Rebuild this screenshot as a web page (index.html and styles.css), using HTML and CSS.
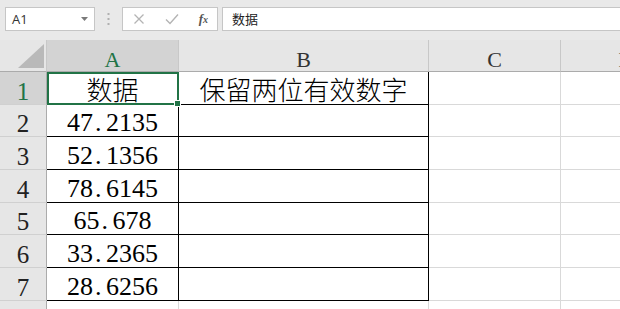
FILE: index.html
```html
<!DOCTYPE html>
<html lang="zh-CN">
<head>
<meta charset="utf-8">
<title>Sheet</title>
<link rel="stylesheet" href="styles.css">
</head>
<body>
<div class="app">
  <div class="fbar">
    <div class="namebox">
      <span class="nb-text">A1</span>
      <svg class="nb-arrow" width="7" height="4" viewBox="0 0 7 4"><path d="M0 0H7L3.5 4Z" fill="#7a7a7a"/></svg>
    </div>
    <div class="grip">
      <svg width="3" height="12" viewBox="0 0 3 12"><rect x="0.5" y="0" width="2" height="2" fill="#b0b0b0"/><rect x="0.5" y="5" width="2" height="2" fill="#b0b0b0"/><rect x="0.5" y="10" width="2" height="2" fill="#b0b0b0"/></svg>
    </div>
    <div class="btns">
      <svg class="ic" width="12" height="12" viewBox="0 0 12 12"><path d="M1.5 1.5L10.5 10.5M10.5 1.5L1.5 10.5" stroke="#b4b4b4" stroke-width="1.3" fill="none"/></svg>
      <svg class="ic" width="14" height="12" viewBox="0 0 14 12"><path d="M1 6.5L5 10.5L13 1.5" stroke="#b4b4b4" stroke-width="1.4" fill="none"/></svg>
      <span class="fx">f<span class="fx-sub">x</span></span>
    </div>
    <div class="finput">数据</div>
  </div>
  <div class="sheet">
    <div class="corner"><svg width="26" height="24" viewBox="0 0 26 24"><path d="M26 0V24H0Z" fill="#b9b9b9"/></svg></div>
    <div class="ch ch-sel">A</div>
    <div class="ch">B</div>
    <div class="ch">C</div>
    <div class="ch">D</div>

    <div class="rh rh-sel">1</div>
    <div class="cell bd sel"><span class="zh">数据</span></div>
    <div class="cell bd"><span class="zh">保留两位有效数字</span></div>
    <div class="cell"></div>
    <div class="cell"></div>

    <div class="rh">2</div>
    <div class="cell bd">47<span class="dot">.</span>2135</div>
    <div class="cell bd"></div>
    <div class="cell"></div>
    <div class="cell"></div>

    <div class="rh">3</div>
    <div class="cell bd">52<span class="dot">.</span>1356</div>
    <div class="cell bd"></div>
    <div class="cell"></div>
    <div class="cell"></div>

    <div class="rh">4</div>
    <div class="cell bd">78<span class="dot">.</span>6145</div>
    <div class="cell bd"></div>
    <div class="cell"></div>
    <div class="cell"></div>

    <div class="rh">5</div>
    <div class="cell bd">65<span class="dot">.</span>678</div>
    <div class="cell bd"></div>
    <div class="cell"></div>
    <div class="cell"></div>

    <div class="rh">6</div>
    <div class="cell bd">33<span class="dot">.</span>2365</div>
    <div class="cell bd"></div>
    <div class="cell"></div>
    <div class="cell"></div>

    <div class="rh">7</div>
    <div class="cell bd">28<span class="dot">.</span>6256</div>
    <div class="cell bd"></div>
    <div class="cell"></div>
    <div class="cell"></div>

    <div class="rh">8</div>
    <div class="cell"></div>
    <div class="cell"></div>
    <div class="cell"></div>
    <div class="cell"></div>
  </div>
</div>
</body>
</html>
```
FILE: styles.css
```css
html, body {
  margin: 0;
  padding: 0;
  background: #e9e9e9;
}
.app {
  width: 620px;
  height: 309px;
  overflow: hidden;
  background: #e9e9e9;
}
.fbar {
  height: 40px;
  box-sizing: border-box;
  padding: 7px 0 0 5px;
  display: flex;
  align-items: flex-start;
}
.namebox {
  width: 90px;
  height: 24px;
  box-sizing: border-box;
  background: #fff;
  border: 1px solid #c6c6c6;
  display: flex;
  align-items: center;
  padding: 0 6px 0 6px;
}
.nb-text {
  flex: 1;
  font-family: "Open Sans", "Liberation Sans", sans-serif;
  font-size: 13px;
  color: #333;
}
.grip {
  width: 27px;
  height: 24px;
  display: flex;
  align-items: center;
  justify-content: center;
}
.btns {
  width: 96px;
  height: 24px;
  box-sizing: border-box;
  background: #fff;
  border: 1px solid #c6c6c6;
  display: flex;
  align-items: center;
  justify-content: space-between;
  padding: 0 9px 0 10px;
}
.fx {
  font-family: "Liberation Serif", serif;
  font-style: italic;
  font-weight: bold;
  font-size: 13px;
  color: #555;
}
.fx-sub {
  font-size: 10px;
}
.finput {
  flex: 1;
  margin-left: 4px;
  margin-right: -2px;
  height: 24px;
  box-sizing: border-box;
  background: #fff;
  border: 1px solid #c6c6c6;
  padding: 0 9px;
  font-family: "Noto Sans CJK SC", sans-serif;
  font-size: 13px;
  line-height: 22px;
  color: #222;
}
.sheet {
  display: grid;
  grid-template-columns: 47px 132px 250px 132px 132px;
  grid-template-rows: 32px repeat(8, 32.7px);
  background: #fff;
  width: 693px;
}
.sheet > div {
  box-sizing: border-box;
}
.corner {
  background: #e6e6e6;
  border-right: 1px solid #c8c8c8;
  border-bottom: 1px solid #ababab;
  display: flex;
  align-items: flex-end;
  justify-content: flex-end;
  padding: 0 2px 3px 0;
}
.ch {
  background: #e6e6e6;
  border-right: 1px solid #c8c8c8;
  border-bottom: 1px solid #ababab;
  display: flex;
  align-items: flex-end;
  justify-content: center;
  font-family: "Liberation Serif", serif;
  font-size: 22px;
  line-height: 1;
  padding-bottom: 0;
  color: #333;
}
.ch-sel {
  background: #d3d3d3;
  color: #217346;
}
.rh {
  background: #e6e6e6;
  border-right: 1px solid #ababab;
  border-bottom: 1px solid #d0d0d0;
  display: flex;
  align-items: flex-end;
  justify-content: center;
  font-family: "Liberation Serif", serif;
  font-size: 25px;
  line-height: 1;
  padding-bottom: 0;
  color: #222;
  overflow: hidden;
}
.rh-sel {
  background: #d3d3d3;
  color: #217346;
}
.cell {
  border-right: 1px solid #d9d9d9;
  border-bottom: 1px solid #d9d9d9;
  display: flex;
  align-items: flex-end;
  justify-content: center;
  font-family: "Liberation Serif", "Noto Sans CJK SC", serif;
  font-size: 26px;
  line-height: 1;
  padding-bottom: 0;
  color: #000;
  white-space: nowrap;
}
.cell.bd {
  border-right-color: #000;
  border-bottom-color: #000;
}
.zh {
  font-family: "Noto Sans CJK SC", sans-serif;
  font-weight: 300;
  font-size: 26px;
  line-height: 1;
  padding-bottom: 2px;
}
.dot {
  display: inline-block;
  width: 0.5em;
  text-align: left;
  padding-left: 2px;
  box-sizing: border-box;
}
.sel {
  position: relative;
}
.sel::before {
  content: "";
  position: absolute;
  left: 0;
  top: 0;
  right: -1px;
  bottom: -1px;
  border: 2px solid #217346;
}
.sel::after {
  content: "";
  position: absolute;
  right: -3px;
  bottom: -3px;
  width: 5px;
  height: 5px;
  background: #217346;
  border: 1px solid #fff;
}
```
